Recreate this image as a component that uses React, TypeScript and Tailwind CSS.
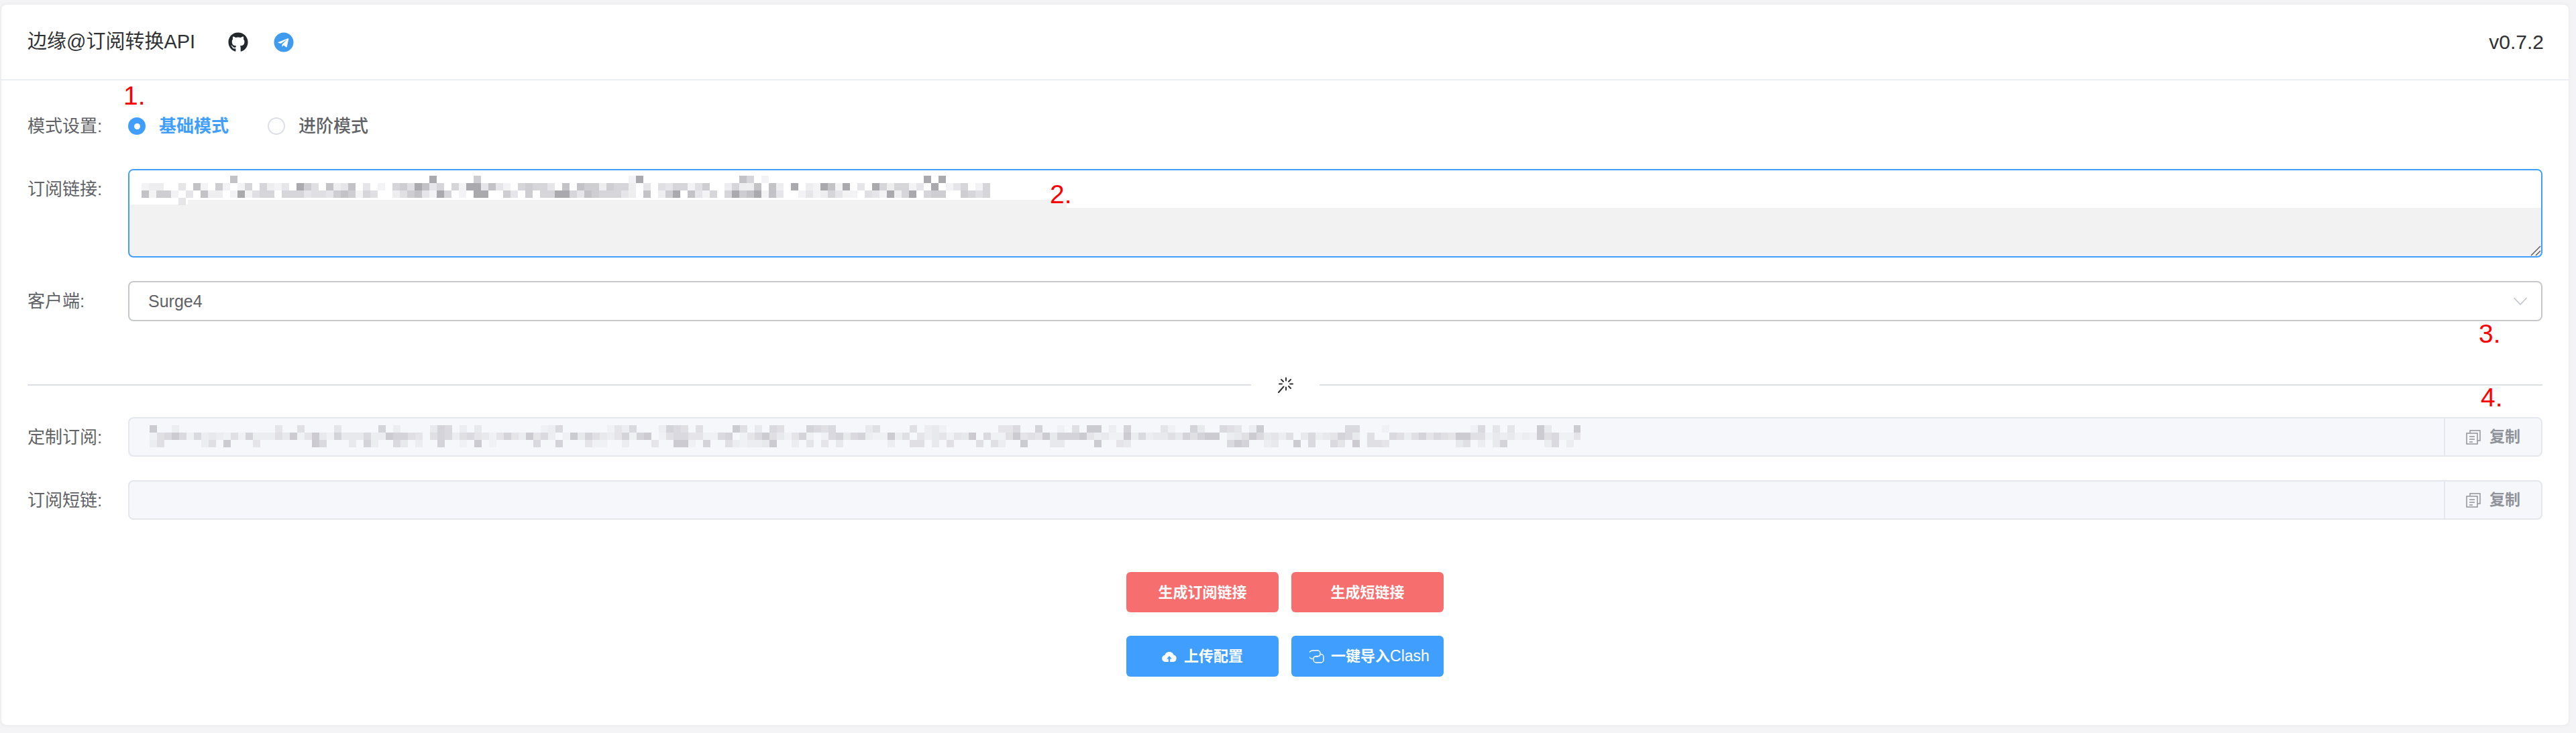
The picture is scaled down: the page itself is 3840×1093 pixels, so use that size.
import { FaGithub, FaTelegram } from "react-icons/fa";

const FONT = "font-['Helvetica_Neue','Liberation_Sans','Noto_Sans_CJK_SC',sans-serif]";

function cells(seed: number, width: number, rows: { y: number; density: number }[], shades: string[]) {
  let s = seed;
  const rnd = () => {
    s = (s * 1664525 + 1013904223) % 4294967296;
    return s / 4294967296;
  };
  const out: { x: number; y: number; fill: string }[] = [];
  for (const row of rows) {
    for (let x = 0; x < width; x += 11) {
      const r = rnd();
      const shade = shades[Math.floor(rnd() * shades.length)];
      if (r < row.density) out.push({ x, y: row.y, fill: shade });
    }
  }
  return out;
}

const mosaicA = [
  ...cells(
    17,
    1265,
    [
      { y: 0, density: 0.1 },
      { y: 11, density: 0.78 },
      { y: 22, density: 0.82 },
    ],
    ["#f3f3f6", "#eeeef1", "#e6e6ea", "#e0e0e4", "#d6d6da", "#cdcdd2", "#c2c2c7", "#a9a9ae"],
  ),
  { x: 55, y: 33, fill: "#e6e6ea" },
];

const mosaicB = cells(
  41,
  2133,
  [
    { y: 0, density: 0.32 },
    { y: 11, density: 0.96 },
    { y: 22, density: 0.38 },
  ],
  ["#f0f1f4", "#ecedf1", "#e8e9ed", "#e4e4e9", "#dfdfe4", "#d9d9df", "#d3d3d9", "#cbcbd1"],
);

function Mosaic({ data, w, h }: { data: { x: number; y: number; fill: string }[]; w: number; h: number }) {
  return (
    <svg width={w} height={h} viewBox={`0 0 ${w} ${h}`} className="relative block" aria-hidden="true">
      {data.map((c, i) => (
        <rect key={i} x={c.x} y={c.y} width="11" height="11" fill={c.fill} />
      ))}
    </svg>
  );
}

function Label({ children, className = "" }: { children: string; className?: string }) {
  return <div className={`w-[150px] shrink-0 text-[26px] leading-[30px] text-[#606266] ${className}`}>{children}</div>;
}

function CopyIcon() {
  return (
    <svg width="22" height="22" viewBox="0 0 22 22" fill="none" stroke="#909399" strokeWidth="1.5" aria-hidden="true">
      <path d="M6 4.5V1h15v15h-4" />
      <rect x="1" y="5" width="16" height="16" />
      <path d="M5 10h8M5 14h8M5 18h5" />
    </svg>
  );
}

function CopyAddon() {
  return (
    <div className="flex w-[145px] shrink-0 items-center gap-[13px] border-l-2 border-[#e4e7ed] pl-[31px]">
      <CopyIcon />
      <span className="text-[23px] font-semibold leading-none text-[#909399]">复制</span>
    </div>
  );
}

function Spinner() {
  return (
    <svg width="24" height="24" viewBox="0 0 24 24" stroke="#303133" strokeWidth="2" strokeLinecap="round" aria-hidden="true">
      <path d="M13 1.5v4M20 4l-3 3M23 10.5h-4M20 17l-3-3M13 19.5v-4M2 23l7.5-8.5M3 10.5h4M6 4l3 3" />
    </svg>
  );
}

function CloudIcon() {
  return (
    <svg width="22" height="18" viewBox="0 0 22 18" aria-hidden="true">
      <path
        fill="#fff"
        fillRule="evenodd"
        d="M5 17a5 5 0 0 1-.7-9.9A7 7 0 0 1 17.6 6.6 5.3 5.3 0 0 1 17 17h-4.8v-4.6h2.6L11 8l-3.8 4.4h2.6V17z"
      />
    </svg>
  );
}

function LinkIcon() {
  return (
    <svg width="22" height="20" viewBox="0 0 22 20" fill="none" stroke="#fff" strokeWidth="1.4" aria-hidden="true">
      <path d="M5 13.5A4 4 0 0 1 5 1h7a4 4 0 0 1 4 4v1.5a3 3 0 0 1-3 3H9" />
      <path d="M17 6.5A4 4 0 0 1 21 10.5v4.5a4 4 0 0 1-4 4h-7a4 4 0 0 1-4-4v-2a3 3 0 0 1 3-3h4" />
    </svg>
  );
}

function Note({ className, children }: { className: string; children: string }) {
  return (
    <span className={`absolute font-['Liberation_Sans',sans-serif] text-[39px] leading-none text-[#fe0000] ${className}`}>
      {children}
    </span>
  );
}

export default function App() {
  return (
    <div className={`relative h-[1093px] bg-[#f4f4f6] pb-[12px] pl-[2px] pr-[11px] pt-[7px] ${FONT}`}>
      <div className="flex h-[1074px] flex-col rounded-lg bg-white shadow-[0_0_6px_rgba(0,0,0,0.06)]">
        <header className="flex h-[113px] shrink-0 items-center justify-between border-b-2 border-[#ebeef5] pl-[39px] pr-[37px]">
          <div className="flex items-center">
            <span className="w-[299px] text-[29px] leading-none text-[#303133]">边缘@订阅转换API</span>
            <FaGithub className="text-[30px] text-[#24292e]" />
            <FaTelegram className="ml-[38px] text-[30px] text-[#3f9bf0]" />
          </div>
          <span className="text-[30px] leading-none text-[#303133]">v0.7.2</span>
        </header>

        <main className="flex flex-1 flex-col px-[39px]">
          <div className="mt-[38px] flex h-[60px] items-center">
            <Label>模式设置:</Label>
            <span className="flex items-center">
              <span className="flex h-[26px] w-[26px] items-center justify-center rounded-full bg-[#409eff]">
                <span className="h-[9px] w-[9px] rounded-full bg-white" />
              </span>
              <span className="ml-[20px] text-[26px] font-semibold leading-none text-[#409eff]">基础模式</span>
            </span>
            <span className="ml-[58px] flex items-center">
              <span className="h-[26px] w-[26px] rounded-full border-2 border-[#dcdfe6] bg-white" />
              <span className="ml-[20px] text-[26px] font-medium leading-none text-[#606266]">进阶模式</span>
            </span>
          </div>

          <div className="mt-[34px] flex">
            <Label className="pt-[15px]">订阅链接:</Label>
            <div className="relative flex h-[132px] flex-1 flex-col overflow-hidden rounded-lg border-2 border-[#409eff] bg-[#f2f2f2]">
              <div className="absolute left-0 top-[51px] h-[5px] w-[87px] bg-[#f2f2f2]" />
              <div className="absolute left-[87px] top-[44px] h-[12px] w-[1310px] bg-[#f2f2f2]" />
              <div className="h-[56px] shrink-0 bg-white pl-[18px] pt-[8px]">
                <Mosaic data={mosaicA} w={1265} h={44} />
              </div>
              <svg width="16" height="16" viewBox="0 0 16 16" stroke="#555" strokeWidth="1.4" className="absolute bottom-0 right-0" aria-hidden="true">
                <path d="M1 15 15 1M8 15l7-7" />
              </svg>
            </div>
          </div>

          <div className="mt-[35px] flex items-center">
            <Label>客户端:</Label>
            <div className="flex h-[60px] flex-1 items-center justify-between rounded-lg border-2 border-[#c6c8ce] bg-white pl-[28px] pr-[20px]">
              <span className="text-[25px] leading-none text-[#606266]">Surge4</span>
              <svg width="22" height="14" viewBox="0 0 22 14" fill="none" stroke="#c0c4cc" strokeWidth="1.6" aria-hidden="true">
                <path d="M1.5 2 11 12l9.5-10" />
              </svg>
            </div>
          </div>

          <div className="mt-[75px] flex h-[40px] items-center">
            <div className="h-[2px] flex-1 bg-[#dcdfe6]" />
            <div className="flex w-[102px] items-center justify-center">
              <Spinner />
            </div>
            <div className="h-[2px] flex-1 bg-[#dcdfe6]" />
          </div>

          <div className="mt-[28px] flex items-center">
            <Label>定制订阅:</Label>
            <div className="flex h-[59px] flex-1 overflow-hidden rounded-lg border-2 border-[#e4e7ed] bg-[#f5f7fa]">
              <div className="flex-1 pl-[30px] pt-[10px]">
                <Mosaic data={mosaicB} w={2133} h={33} />
              </div>
              <CopyAddon />
            </div>
          </div>

          <div className="mt-[35px] flex items-center">
            <Label>订阅短链:</Label>
            <div className="flex h-[59px] flex-1 overflow-hidden rounded-lg border-2 border-[#e4e7ed] bg-[#f5f7fa]">
              <div className="flex-1" />
              <CopyAddon />
            </div>
          </div>

          <div className="mt-[78px] flex justify-center gap-[19px]">
            <button className="h-[60px] w-[227px] rounded-md bg-[#f76e6e] text-[22px] font-semibold text-white">生成订阅链接</button>
            <button className="h-[60px] w-[227px] rounded-md bg-[#f76e6e] text-[22px] font-semibold text-white">生成短链接</button>
          </div>

          <div className="mt-[35px] flex justify-center gap-[19px]">
            <button className="flex h-[61px] w-[227px] items-center justify-center gap-[11px] rounded-md bg-[#409eff] text-[22px] font-semibold text-white">
              <CloudIcon />
              上传配置
            </button>
            <button className="flex h-[61px] w-[227px] items-center justify-center gap-[10px] rounded-md bg-[#409eff] pl-[6px] text-[22px] font-semibold text-white">
              <LinkIcon />
              <span>
                一键导入<span className="text-[23px] font-normal">Clash</span>
              </span>
            </button>
          </div>
        </main>
      </div>

      <Note className="left-[184px] top-[123px]">1.</Note>
      <Note className="left-[1565px] top-[270px]">2.</Note>
      <Note className="left-[3695px] top-[478px]">3.</Note>
      <Note className="left-[3698px] top-[573px]">4.</Note>
    </div>
  );
}
